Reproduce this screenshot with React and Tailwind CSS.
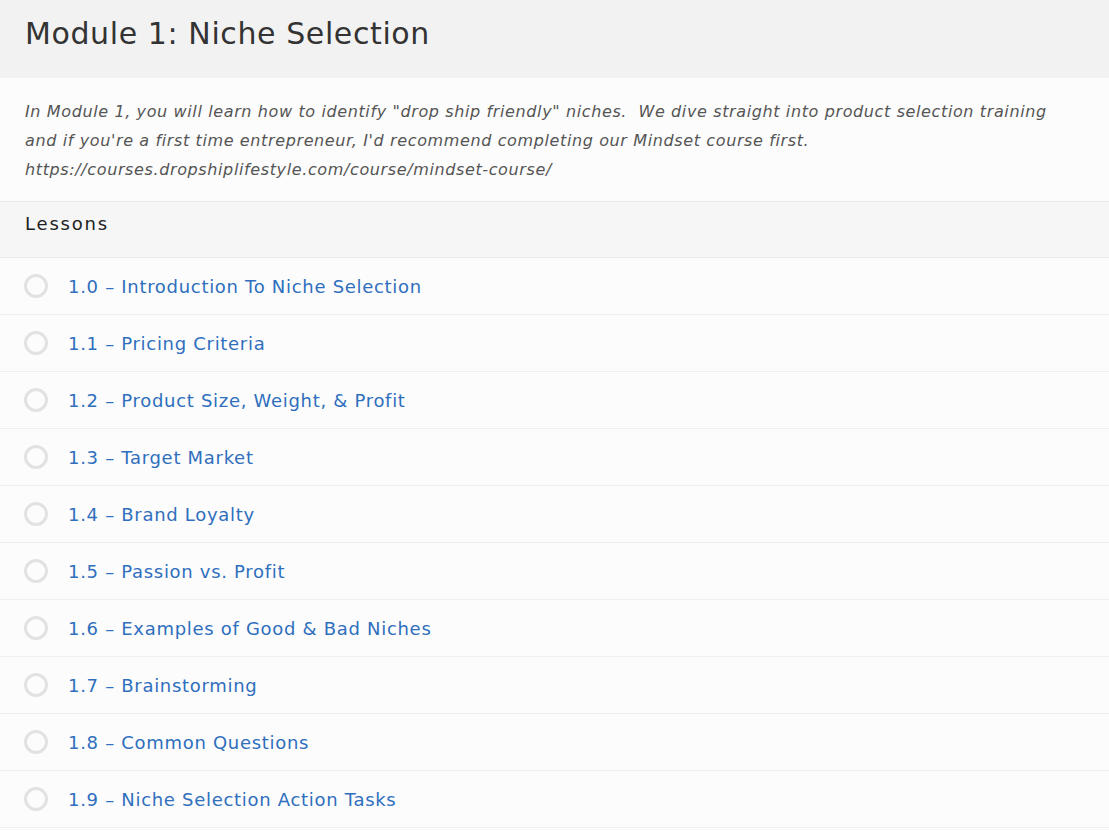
import React from 'react';

const lessons = [
  '1.0 – Introduction To Niche Selection',
  '1.1 – Pricing Criteria',
  '1.2 – Product Size, Weight, & Profit',
  '1.3 – Target Market',
  '1.4 – Brand Loyalty',
  '1.5 – Passion vs. Profit',
  '1.6 – Examples of Good & Bad Niches',
  '1.7 – Brainstorming',
  '1.8 – Common Questions',
  '1.9 – Niche Selection Action Tasks',
];

export default function App() {
  return (
    <div className="min-h-screen bg-[#fcfcfc] font-['DejaVu_Sans',sans-serif]">
      <header className="h-[78px] bg-[#f2f2f2] px-[25px] flex items-center">
        <h1 className="text-[30px] text-[#333] tracking-[0.6px] leading-none pb-[10px]">Module 1: Niche Selection</h1>
      </header>

      <div className="px-[25px] pt-[19px] pb-[17px] border-b border-[#ebebeb]">
        <p className="italic text-[16px] leading-[29px] text-[#555] tracking-[0.62px]">
          In Module 1, you will learn how to identify "drop ship friendly" niches.&nbsp; We dive straight into product selection training and if you're a first time entrepreneur, I'd recommend completing our Mindset course first. https://courses.dropshiplifestyle.com/course/mindset-course/
        </p>
      </div>

      <div className="h-[56px] bg-[#f6f6f6] border-b border-[#ebebeb] px-[25px] flex items-center">
        <h2 className="text-[18px] text-[#222] pb-[12px] tracking-[1.8px]">Lessons</h2>
      </div>

      <ul>
        {lessons.map((l) => (
          <li key={l} className="h-[57px] border-b border-[#efefef] flex items-center px-[24px]">
            <span className="w-[24px] h-[24px] rounded-full border-[3px] border-[#e2e2e2] shrink-0" />
            <a className="ml-[20px] text-[18px] text-[#2f6fbd] tracking-[0.7px]">{l}</a>
          </li>
        ))}
      </ul>
    </div>
  );
}
